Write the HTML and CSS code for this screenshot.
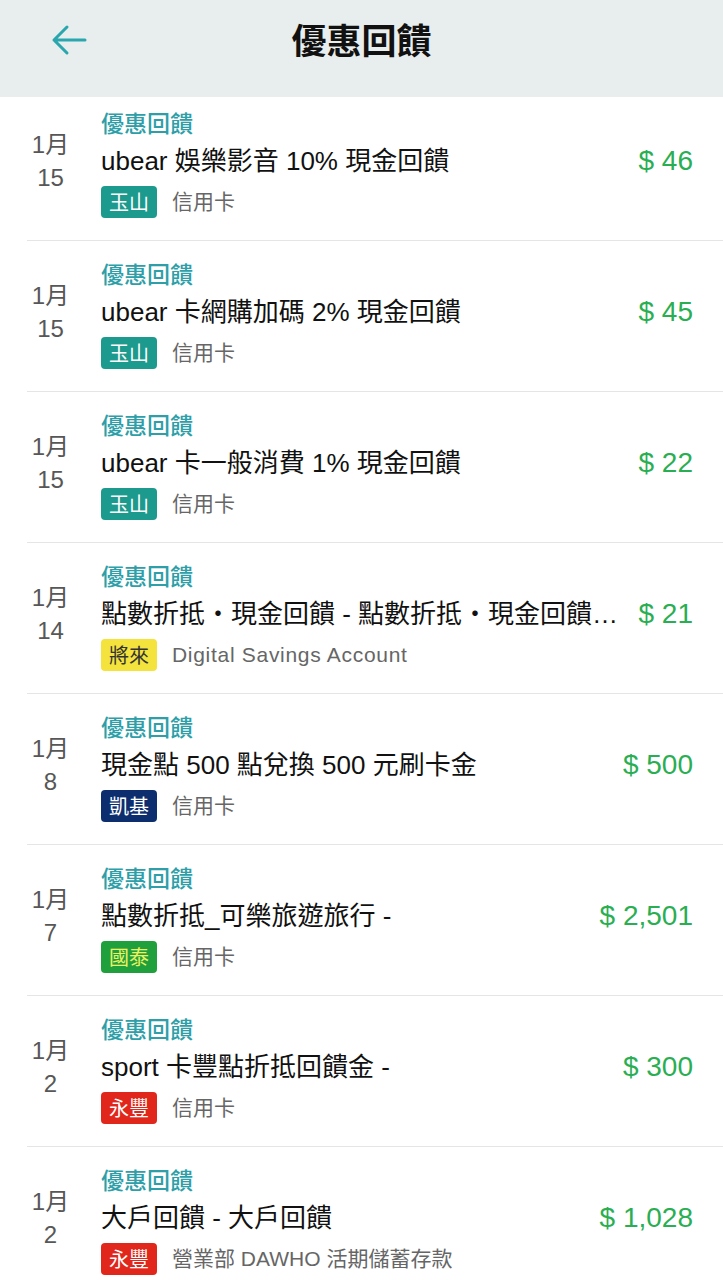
FILE: index.html
```html
<!DOCTYPE html>
<html lang="zh-Hant">
<head>
<meta charset="utf-8">
<title>優惠回饋</title>
<link rel="stylesheet" href="styles.css">
</head>
<body>
<header class="header">
  <svg class="back" width="40" height="40" viewBox="0 0 40 40" aria-hidden="true">
    <path d="M4 18 H35 M17 5 L4 18 L17 31" fill="none" stroke="#2aa7ae" stroke-width="3" stroke-linecap="round" stroke-linejoin="round"/>
  </svg>
  <h1 class="title-bar">優惠回饋</h1>
</header>
<main class="list">
  <div class="row">
    <div class="date"><span>1月</span><span>15</span></div>
    <div class="main">
      <div class="cat">優惠回饋</div>
      <div class="title">ubear 娛樂影音 10% 現金回饋</div>
      <div class="meta"><span class="badge esun">玉山</span><span class="acct">信用卡</span></div>
    </div>
    <div class="amt">$ 46</div>
  </div>
  <div class="row">
    <div class="date"><span>1月</span><span>15</span></div>
    <div class="main">
      <div class="cat">優惠回饋</div>
      <div class="title">ubear 卡網購加碼 2% 現金回饋</div>
      <div class="meta"><span class="badge esun">玉山</span><span class="acct">信用卡</span></div>
    </div>
    <div class="amt">$ 45</div>
  </div>
  <div class="row">
    <div class="date"><span>1月</span><span>15</span></div>
    <div class="main">
      <div class="cat">優惠回饋</div>
      <div class="title">ubear 卡一般消費 1% 現金回饋</div>
      <div class="meta"><span class="badge esun">玉山</span><span class="acct">信用卡</span></div>
    </div>
    <div class="amt">$ 22</div>
  </div>
  <div class="row">
    <div class="date"><span>1月</span><span>14</span></div>
    <div class="main">
      <div class="cat">優惠回饋</div>
      <div class="title">點數折抵・現金回饋 - 點數折抵・現金回饋 - 點數折抵</div>
      <div class="meta"><span class="badge future">將來</span><span class="acct latin">Digital Savings Account</span></div>
    </div>
    <div class="amt">$ 21</div>
  </div>
  <div class="row">
    <div class="date"><span>1月</span><span>8</span></div>
    <div class="main">
      <div class="cat">優惠回饋</div>
      <div class="title">現金點 500 點兌換 500 元刷卡金</div>
      <div class="meta"><span class="badge kgi">凱基</span><span class="acct">信用卡</span></div>
    </div>
    <div class="amt">$ 500</div>
  </div>
  <div class="row">
    <div class="date"><span>1月</span><span>7</span></div>
    <div class="main">
      <div class="cat">優惠回饋</div>
      <div class="title">點數折抵_可樂旅遊旅行 -</div>
      <div class="meta"><span class="badge cathay">國泰</span><span class="acct">信用卡</span></div>
    </div>
    <div class="amt">$ 2,501</div>
  </div>
  <div class="row">
    <div class="date"><span>1月</span><span>2</span></div>
    <div class="main">
      <div class="cat">優惠回饋</div>
      <div class="title">sport 卡豐點折抵回饋金 -</div>
      <div class="meta"><span class="badge sinopac">永豐</span><span class="acct">信用卡</span></div>
    </div>
    <div class="amt">$ 300</div>
  </div>
  <div class="row">
    <div class="date"><span>1月</span><span>2</span></div>
    <div class="main">
      <div class="cat">優惠回饋</div>
      <div class="title">大戶回饋 - 大戶回饋</div>
      <div class="meta"><span class="badge sinopac">永豐</span><span class="acct">營業部 DAWHO 活期儲蓄存款</span></div>
    </div>
    <div class="amt">$ 1,028</div>
  </div>
</main>
</body>
</html>
```

FILE: styles.css
```css
* { box-sizing: border-box; }
html, body {
  margin: 0;
  padding: 0;
  background: #ffffff;
}
body {
  width: 723px;
  height: 1280px;
  overflow: hidden;
  font-family: "Liberation Sans", "Noto Sans CJK TC", sans-serif;
  color: #111;
}
.header {
  height: 97px;
  background: #e8eded;
  display: flex;
  align-items: flex-start;
  justify-content: center;
  padding-top: 16px;
  position: relative;
}
.back {
  position: absolute;
  left: 50px;
  top: 22px;
}
.title-bar {
  margin: 0;
  font-family: "Noto Sans CJK TC", sans-serif;
  font-weight: 700;
  font-size: 35px;
  line-height: 46px;
  color: #111;
}
.list {
  height: 1183px;
  overflow: hidden;
}
.row {
  display: flex;
  align-items: flex-start;
  margin-left: 27px;
  padding-right: 30px;
  height: 151px;
  border-bottom: 1px solid #e4e6e6;
}
.row:first-child {
  margin-top: -7px;
}
.date {
  width: 47px;
  flex: none;
  padding-top: 38px;
  display: flex;
  flex-direction: column;
  align-items: center;
  font-size: 24px;
  line-height: 33px;
  color: #575757;
}
.main {
  flex: 1;
  min-width: 0;
  margin-left: 27px;
  padding-top: 18px;
}
.cat {
  font-family: "Noto Sans CJK TC", sans-serif;
  font-size: 23px;
  line-height: 28px;
  color: #2e9fa8;
  font-weight: 500;
}
.title {
  margin-top: 7px;
  font-size: 26px;
  line-height: 36px;
  color: #111;
  white-space: nowrap;
  overflow: hidden;
  text-overflow: ellipsis;
}
.meta {
  margin-top: 7px;
  display: flex;
  align-items: center;
  gap: 15px;
}
.badge {
  display: inline-block;
  height: 32px;
  line-height: 32px;
  padding: 0 8px;
  border-radius: 4px;
  font-family: "Noto Sans CJK TC", sans-serif;
  font-size: 20px;
  color: #fff;
}
.esun { background: #1d9a8e; }
.future { background: #f4e33c; color: #333; }
.kgi { background: #0c2e6f; }
.cathay { background: #1fa03c; color: #eef260; }
.sinopac { background: #e1261c; }
.acct {
  font-size: 21px;
  line-height: 32px;
  color: #666;
}
.acct.latin {
  letter-spacing: 0.7px;
}
.amt {
  flex: none;
  margin-left: 20px;
  padding-top: 53px;
  font-size: 28px;
  line-height: 36px;
  color: #2aae52;
  text-align: right;
}
```
